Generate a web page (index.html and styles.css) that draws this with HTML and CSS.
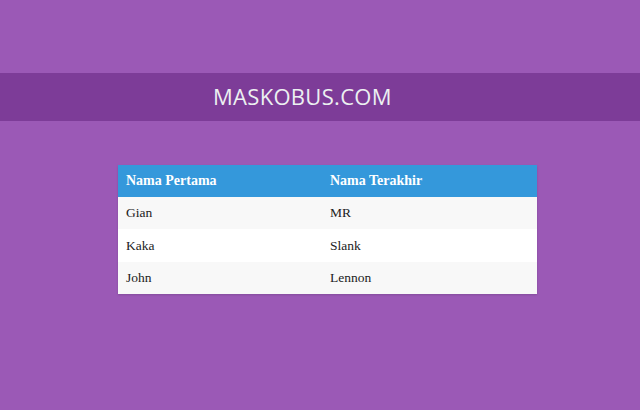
FILE: index.html
```html
<!DOCTYPE html>
<html>
<head>
<meta charset="utf-8">
<link rel="stylesheet" href="styles.css">
</head>
<body>
<header class="banner">
  <h1 class="brand">MASKOBUS.COM</h1>
</header>
<main class="content">
  <table class="names">
    <thead>
      <tr><th class="col-first">Nama Pertama</th><th>Nama Terakhir</th></tr>
    </thead>
    <tbody>
      <tr><td>Gian</td><td>MR</td></tr>
      <tr><td>Kaka</td><td>Slank</td></tr>
      <tr><td>John</td><td>Lennon</td></tr>
    </tbody>
  </table>
</main>
</body>
</html>
```
FILE: styles.css
```css
html, body {
  margin: 0;
  padding: 0;
}
body {
  background: #9b59b6;
  width: 640px;
  height: 410px;
  overflow: hidden;
  font-family: "Liberation Serif", "Times New Roman", serif;
}
.banner {
  margin-top: 73px;
  height: 48px;
  background: #7d3c98;
  display: flex;
  align-items: center;
  padding-left: 213px;
}
.brand {
  margin: 0 0 3px 0;
  font-family: "Open Sans", sans-serif;
  font-weight: 400;
  font-size: 22px;
  line-height: 1;
  color: #ecf0f1;
  letter-spacing: 0.3px;
}
.content {
  padding-top: 44px;
  padding-left: 118px;
}
.names {
  width: 419px;
  border-collapse: collapse;
  font-size: 13.5px;
  box-shadow: 0 1px 2px rgba(0,0,0,0.15);
}
.names th {
  background: #3498db;
  color: #ffffff;
  font-weight: bold;
  font-size: 14px;
  text-align: left;
  height: 32px;
  padding: 0 8px;
}
.names .col-first {
  width: 188px;
}
.names td {
  height: 32.4px;
  padding: 0 8px;
  color: #222;
}
.names tbody tr:nth-child(odd) td {
  background: #f8f8f8;
}
.names tbody tr:nth-child(even) td {
  background: #ffffff;
}
```
